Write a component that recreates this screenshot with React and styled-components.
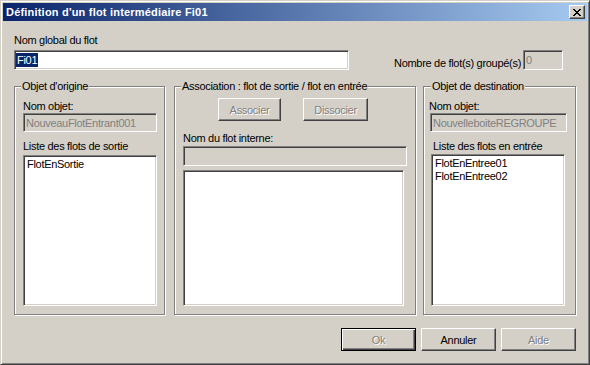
import styled, { createGlobalStyle } from "styled-components";

const GlobalStyle = createGlobalStyle`
  html, body {
    margin: 0;
    padding: 0;
    background: #d4d0c8;
  }
  body {
    font-family: "Liberation Sans", Arial, sans-serif;
    font-size: 11px;
  }
`;

const Window = styled.div`
  width: 590px;
  height: 365px;
  box-sizing: border-box;
  display: flex;
  flex-direction: column;
  padding: 2px;
  background: #d4d0c8;
  border: 1px solid;
  border-color: #d4d0c8 #404040 #404040 #d4d0c8;
  box-shadow: inset 1px 1px #fff, inset -1px -1px #808080;
  font-family: "Liberation Sans", Arial, sans-serif;
  font-size: 11px;
  letter-spacing: -0.3px;
  color: #000;
`;

const TitleBar = styled.div`
  height: 18px;
  flex-shrink: 0;
  display: flex;
  align-items: center;
  justify-content: space-between;
  padding: 0 2px 0 3px;
  background: linear-gradient(to right, #0a246a, #a6caf0);
`;

const Title = styled.span`
  color: #fff;
  font-weight: bold;
  font-size: 11px;
  line-height: 13px;
  letter-spacing: 0.2px;
  white-space: nowrap;
`;

const CloseButton = styled.div`
  width: 16px;
  height: 14px;
  box-sizing: border-box;
  display: flex;
  align-items: center;
  justify-content: center;
  background: #d4d0c8;
  border: 1px solid;
  border-color: #fff #404040 #404040 #fff;
  box-shadow: inset -1px -1px #808080;
`;

const Body = styled.div`
  flex: 1;
  display: flex;
  flex-direction: column;
  padding: 13px 11px 0 11px;
`;

const TopRow = styled.div`
  display: flex;
  align-items: flex-end;
`;

const Column = styled.div`
  display: flex;
  flex-direction: column;
`;

const Label = styled.div`
  line-height: 13px;
  white-space: nowrap;
  margin: ${(p) => p.$m || "0"};
`;

const Field = styled.div`
  box-sizing: border-box;
  width: ${(p) => p.$w}px;
  height: ${(p) => p.$h || 20}px;
  margin: ${(p) => p.$m || "0"};
  display: flex;
  align-items: center;
  padding: 0 2px;
  overflow: hidden;
  white-space: nowrap;
  background: ${(p) => (p.$disabled ? "#d4d0c8" : "#fff")};
  color: ${(p) => (p.$disabled ? "#808080" : "#000")};
  border: 1px solid;
  border-color: #808080 #fff #fff #808080;
  box-shadow: inset 1px 1px #404040, inset -1px -1px #d4d0c8;
`;

const Selected = styled.span`
  background: #0a246a;
  color: #fff;
  line-height: 14px;
  padding: 0 1px;
  margin-left: -1px;
`;

const CountBox = styled.div`
  display: flex;
  align-items: flex-end;
  gap: 2px;
  margin-left: auto;
  margin-right: 13px;
`;

const GroupRow = styled.div`
  display: flex;
  margin-top: 16px;
  height: 229px;
`;

const Group = styled.div`
  box-sizing: border-box;
  width: ${(p) => p.$w}px;
  margin-left: ${(p) => p.$ml || 0}px;
  display: flex;
  flex-direction: column;
  padding: 0 8px 8px ${(p) => p.$pl ?? 8}px;
  border: 1px solid #808080;
  box-shadow: inset 1px 1px #fff, 1px 1px #fff;
`;

const Legend = styled.span`
  align-self: flex-start;
  margin: -7px 0 0 ${(p) => p.$ml ?? -2}px;
  padding: 0 1px;
  line-height: 13px;
  background: #d4d0c8;
  white-space: nowrap;
`;

const ListBox = styled.div`
  flex: 1;
  box-sizing: border-box;
  width: ${(p) => p.$w}px;
  margin: ${(p) => p.$m || "0"};
  padding: 2px 3px;
  background: #fff;
  border: 1px solid;
  border-color: #808080 #fff #fff #808080;
  box-shadow: inset 1px 1px #404040, inset -1px -1px #d4d0c8;
`;

const ListItem = styled.div`
  line-height: 13px;
  white-space: nowrap;
`;

const ActionRow = styled.div`
  display: flex;
  gap: 22px;
  margin: 5px 0 0 35px;
`;

const Button = styled.div`
  box-sizing: border-box;
  width: ${(p) => p.$w || 75}px;
  height: 23px;
  display: flex;
  align-items: center;
  justify-content: center;
  background: #d4d0c8;
  color: ${(p) => (p.$disabled ? "#808080" : "#000")};
  text-shadow: ${(p) => (p.$disabled ? "1px 1px 0 #fff" : "none")};
  border: 1px solid;
  border-color: ${(p) =>
    p.$default ? "#000" : "#fff #404040 #404040 #fff"};
  box-shadow: ${(p) =>
    p.$default
      ? "inset 1px 1px #fff, inset -1px -1px #404040, inset -2px -2px #808080"
      : "inset -1px -1px #808080"};
`;

const Footer = styled.div`
  display: flex;
  justify-content: flex-end;
  gap: 5px;
  margin-top: 13px;
`;

const CloseGlyph = () => (
  <svg width="8" height="7" viewBox="0 0 8 7" shapeRendering="crispEdges">
    <path
      fill="#000"
      d="M0 0h2v1H0zM6 0h2v1H6zM1 1h2v1H1zM5 1h2v1H5zM2 2h4v1H2zM3 3h2v1H3zM2 4h4v1H2zM1 5h2v1H1zM5 5h2v1H5zM0 6h2v1H0zM6 6h2v1H6z"
    />
  </svg>
);

export default function App() {
  return (
    <>
      <GlobalStyle />
      <Window>
        <TitleBar>
          <Title>Définition d'un flot intermédiaire Fi01</Title>
          <CloseButton>
            <CloseGlyph />
          </CloseButton>
        </TitleBar>
        <Body>
          <TopRow>
            <Column>
              <Label>Nom global du flot</Label>
              <Field $w={335} $m="3px 0 0 0">
                <Selected>Fi01</Selected>
              </Field>
            </Column>
            <CountBox>
              <Label>Nombre de flot(s) groupé(s)</Label>
              <Field $w={40} $disabled>
                0
              </Field>
            </CountBox>
          </TopRow>

          <GroupRow>
            <Group $w={151}>
              <Legend>Objet d'origine</Legend>
              <Label $m="7px 0 0 0">Nom objet:</Label>
              <Field $w={134} $h={19} $disabled>
                NouveauFlotEntrant001
              </Field>
              <Label $m="8px 0 2px 0">Liste des flots de sortie</Label>
              <ListBox $w={134}>
                <ListItem>FlotEnSortie</ListItem>
              </ListBox>
            </Group>

            <Group $w={242} $ml={9}>
              <Legend>Association : flot de sortie / flot en entrée</Legend>
              <ActionRow>
                <Button $w={63} $disabled>
                  Associer
                </Button>
                <Button $w={65} $disabled>
                  Dissocier
                </Button>
              </ActionRow>
              <Label $m="11px 0 1px 0">Nom du flot interne:</Label>
              <Field $w={224} $disabled />
              <ListBox $w={221} $m="4px 0 0 0" />
            </Group>

            <Group $w={153} $ml={7} $pl={6}>
              <Legend $ml={1}>Objet de destination</Legend>
              <Label $m="7px 0 0 -1px">Nom objet:</Label>
              <Field $w={137} $h={19} $disabled>
                NouvelleboiteREGROUPE
              </Field>
              <Label $m="8px 0 1px 3px">Liste des flots en entrée</Label>
              <ListBox $w={134} $m="0 0 0 1px">
                <ListItem>FlotEnEntree01</ListItem>
                <ListItem>FlotEnEntree02</ListItem>
              </ListBox>
            </Group>
          </GroupRow>

          <Footer>
            <Button $default $disabled>
              Ok
            </Button>
            <Button>Annuler</Button>
            <Button $disabled>Aide</Button>
          </Footer>
        </Body>
      </Window>
    </>
  );
}
